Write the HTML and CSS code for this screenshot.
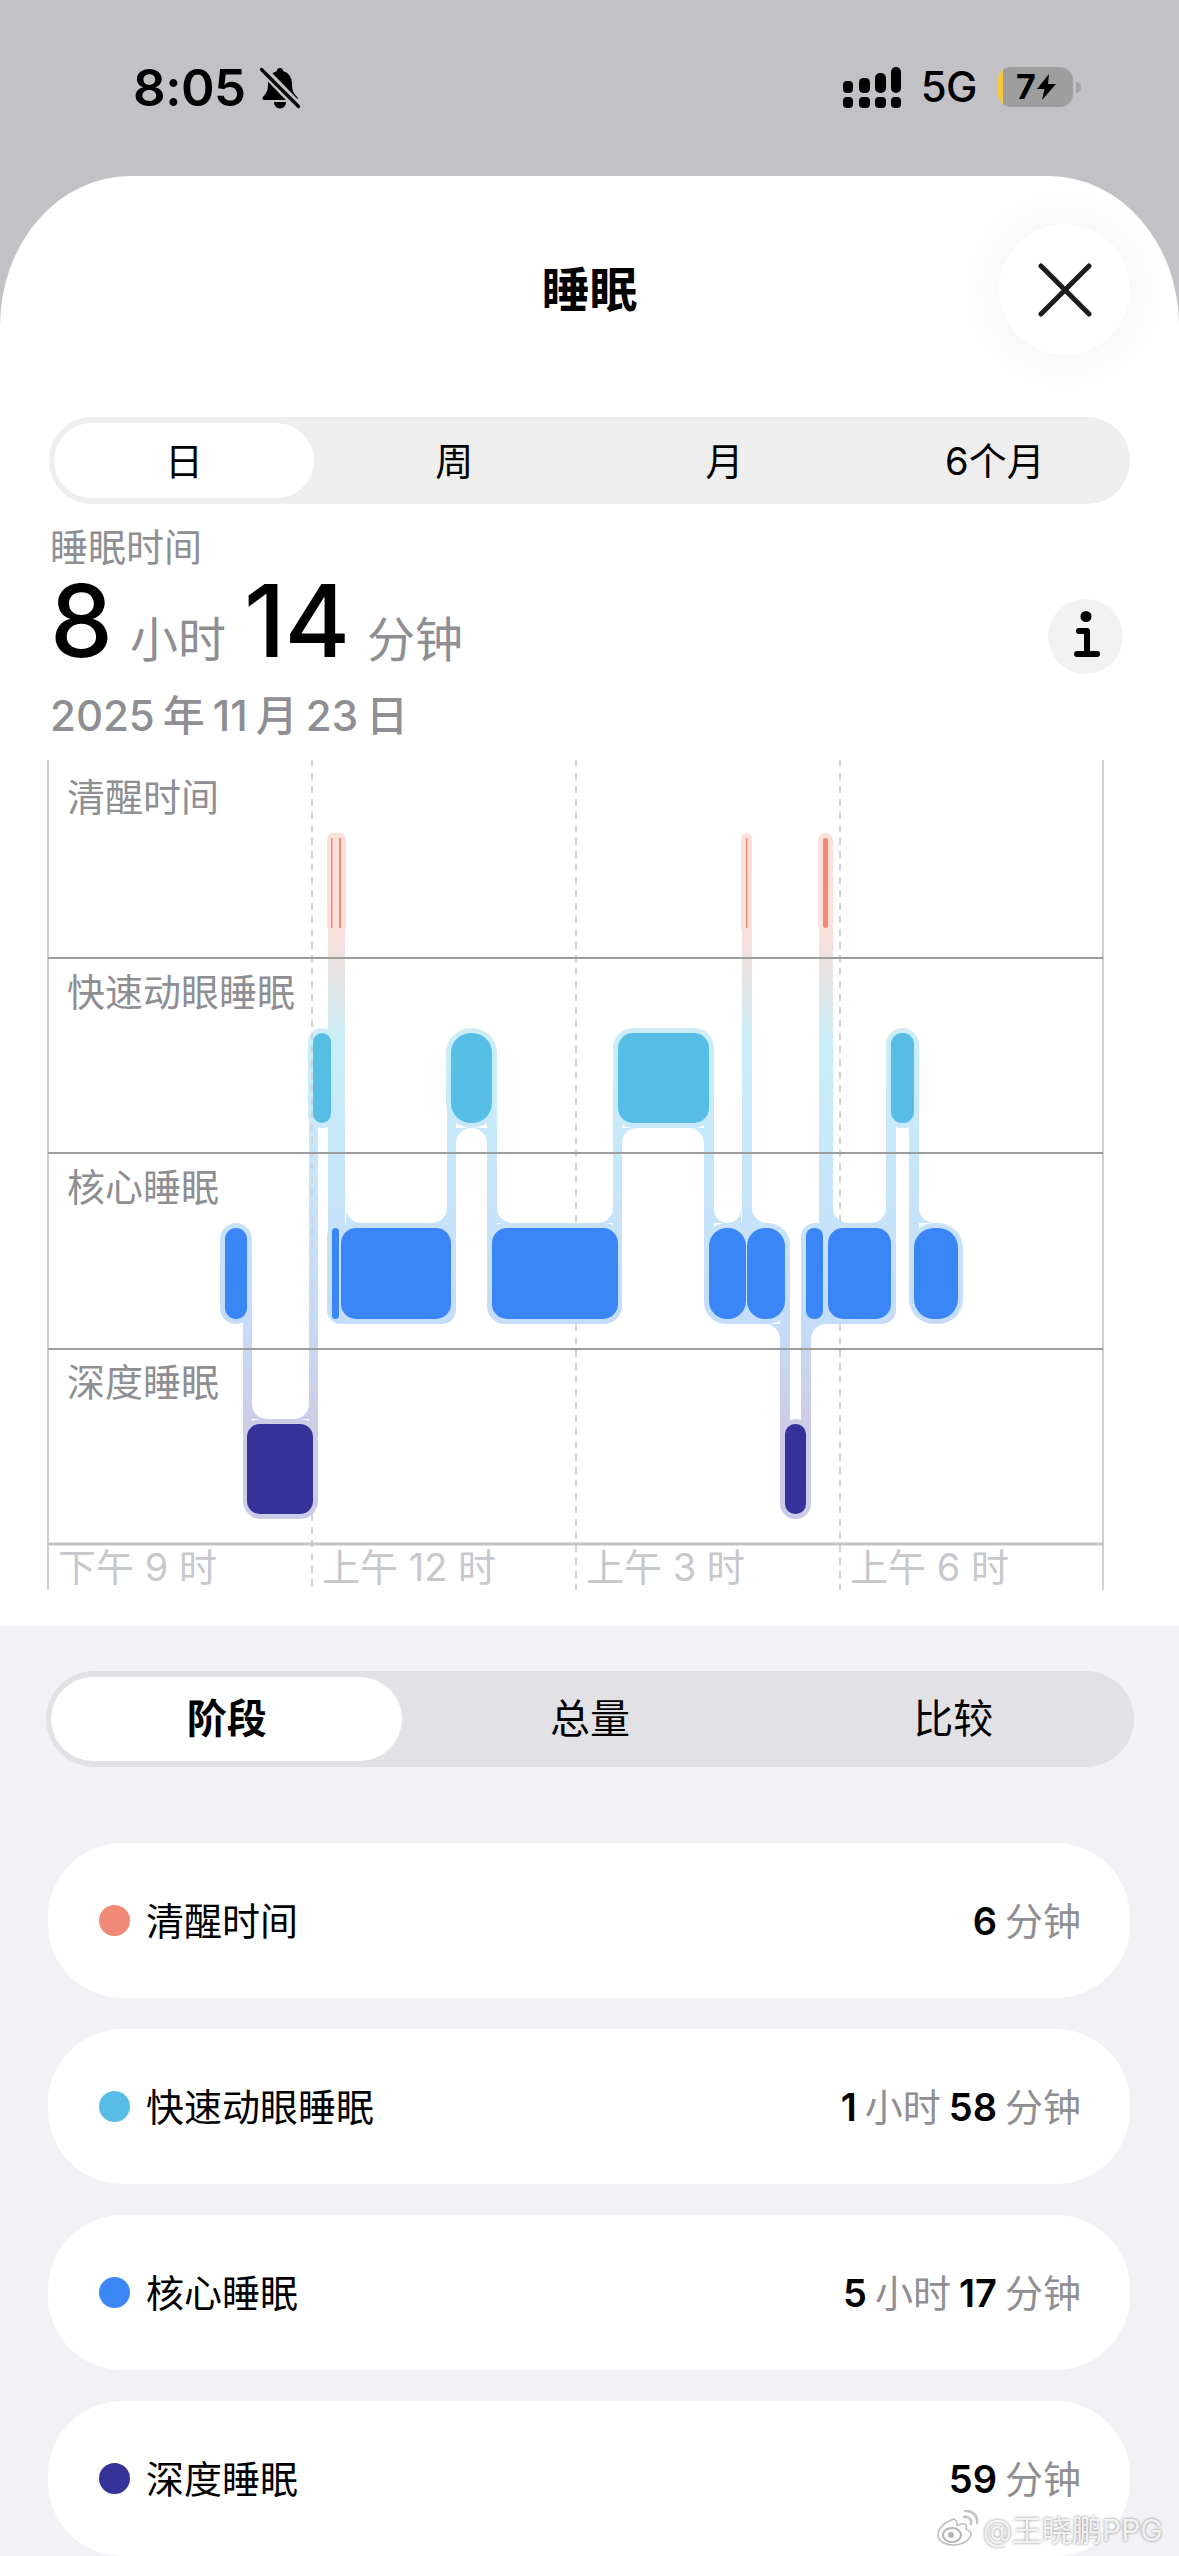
FILE: index.html
```html
<!DOCTYPE html>
<html lang="zh">
<head>
<meta charset="utf-8">
<title>睡眠</title>
<link rel="stylesheet" href="styles.css">
</head>
<body>
<div class="page">
  <div class="backdrop">
    <header class="status">
      <div class="status-left">
        <span class="time">8:05</span>
        <svg class="bell" width="42" height="44" viewBox="0 0 42 44">
          <path d="M21 2c2 0 3 1.500 3.300 3.200 6 1.600 8.700 6.600 8.700 13 0 6 1.500 9 5 12.500 1.200 1.300.6 3.300-1.500 3.300H5.500c-2.100 0-2.700-2-1.500-3.300 3.500-3.500 5-6.500 5-12.500 0-6.400 2.700-11.400 8.700-13C18 3 19 2 21 2zM15 36h12c0 3.600-2.600 6.500-6 6.500s-6-2.900-6-6.500z" fill="#000"/>
          <path d="M3 3l36 37" stroke="#c2c1c6" stroke-width="9"/>
          <path d="M2.500 3.500L39.500 40.500" stroke="#000" stroke-width="3.200" stroke-linecap="round"/>
        </svg>
      </div>
      <div class="status-right">
        <svg class="signal" width="58" height="41" viewBox="0 0 58 41">
          <rect x="0" y="14" width="10" height="12" rx="4"/>
          <rect x="16" y="11" width="11" height="15" rx="4.500"/>
          <rect x="32" y="6" width="11" height="20" rx="5"/>
          <rect x="48" y="0" width="10" height="26" rx="5"/>
          <rect x="0" y="30" width="10" height="11" rx="4"/>
          <rect x="16" y="30" width="11" height="11" rx="4"/>
          <rect x="32" y="30" width="11" height="11" rx="4"/>
          <rect x="48" y="30" width="10" height="11" rx="4"/>
        </svg>
        <span class="net">5G</span>
        <div class="battery">
          <span class="batt-level">7</span>
          <svg class="bolt" width="19" height="26" viewBox="0 0 19 26"><path d="M12 0L0 15h7.500L5 26 19 10h-8z" fill="#000"/></svg>
        </div>
        <span class="batt-nub"></span>
      </div>
    </header>

    <main class="sheet">
      <div class="nav">
        <h1 class="title">睡眠</h1>
        <button class="close">
          <svg width="54" height="54" viewBox="0 0 54 54"><path d="M3 3l48 48M51 3L3 51" stroke="#1c1c1e" stroke-width="5" stroke-linecap="round"/></svg>
        </button>
      </div>

      <div class="seg seg-range">
        <span class="seg-item is-on">日</span>
        <span class="seg-item">周</span>
        <span class="seg-item">月</span>
        <span class="seg-item">6个月</span>
      </div>

      <section class="summary">
        <div class="sum-label">睡眠时间</div>
        <div class="sum-row">
          <div class="big">
            <span class="big-num">8</span><span class="big-unit">小时</span>
            <span class="big-num">14</span><span class="big-unit">分钟</span>
          </div>
          <button class="info">
            <svg width="32" height="50" viewBox="0 0 32 50">
              <circle cx="15" cy="5.500" r="5.500" fill="#000"/>
              <path d="M8 20h8v23M6 43h20" fill="none" stroke="#000" stroke-width="6" stroke-linecap="round" stroke-linejoin="round"/>
            </svg>
          </button>
        </div>
        <div class="date"><span>2025</span><span>年</span><span>11</span><span>月</span><span>23</span><span>日</span></div>
      </section>

      <svg class="chart" width="1179" height="866" viewBox="0 760 1179 866">
        <defs>
          <linearGradient id="halo" gradientUnits="userSpaceOnUse" x1="0" y1="833" x2="0" y2="1519">
            <stop offset="0" stop-color="#fbdfda"/>
            <stop offset=".141" stop-color="#fbe0db"/>
            <stop offset=".22" stop-color="#e3e5e7"/>
            <stop offset=".309" stop-color="#c8eef8"/>
            <stop offset=".462" stop-color="#c7e7fb"/>
            <stop offset=".716" stop-color="#c5dcf8"/>
            <stop offset=".854" stop-color="#cdcde8"/>
            <stop offset="1" stop-color="#cacbe7"/>
          </linearGradient>
        </defs>

        <g fill="url(#halo)">
          <!-- awake halos -->
          <rect x="327" y="833" width="19" height="100" rx="6"/>
          <rect x="741" y="833" width="11" height="100" rx="5.500"/>
          <rect x="818" y="833" width="15" height="100" rx="7.500"/>
          <!-- rem halos -->
          <rect x="308" y="1028" width="28" height="100" rx="14"/>
          <rect x="446" y="1028" width="51" height="100" rx="25"/>
          <rect x="613" y="1028" width="101" height="100" rx="20"/>
          <rect x="886" y="1028" width="33" height="100" rx="16.500"/>
          <!-- core halos -->
          <rect x="220" y="1223" width="32" height="101" rx="16"/>
          <rect x="327" y="1223" width="129" height="101" rx="14"/>
          <rect x="487" y="1223" width="135" height="101" rx="18"/>
          <rect x="704" y="1223" width="86" height="101" rx="22"/>
          <rect x="801" y="1223" width="95" height="101" rx="14"/>
          <rect x="909" y="1223" width="54" height="101" rx="25"/>
          <!-- deep halos -->
          <rect x="243" y="1419" width="75" height="100" rx="18"/>
          <rect x="780" y="1419" width="31" height="100" rx="15.500"/>
          <!-- connectors -->
          <rect x="243" y="1300" width="9" height="140"/>
          <rect x="309" y="1100" width="9" height="340"/>
          <rect x="328" y="920" width="17" height="350"/>
          <rect x="447" y="1100" width="9" height="150"/>
          <rect x="487" y="1100" width="10" height="150"/>
          <rect x="613" y="1100" width="9" height="150"/>
          <rect x="704" y="1100" width="10" height="150"/>
          <rect x="742" y="920" width="10" height="330"/>
          <rect x="819" y="920" width="14" height="330"/>
          <rect x="886" y="1100" width="10" height="150"/>
          <rect x="909" y="1100" width="10" height="150"/>
          <rect x="780" y="1300" width="10" height="140"/>
          <rect x="801" y="1300" width="10" height="140"/>
          <!-- fillets -->
          <path d="M346 1223V1208A15 15 0 0 0 361 1223Z"/>
          <path d="M447 1223V1208A15 15 0 0 1 432 1223Z"/>
          <path d="M497 1223V1208A15 15 0 0 0 512 1223Z"/>
          <path d="M613 1223V1208A15 15 0 0 1 598 1223Z"/>
          <path d="M714 1223V1208A13.500 13.500 0 0 0 727.500 1223Z"/>
          <path d="M741 1223V1208A13.500 13.500 0 0 1 727.500 1223Z"/>
          <path d="M752 1223V1208A15 15 0 0 0 767 1223Z"/>
          <path d="M833 1223V1208A15 15 0 0 0 848 1223Z"/>
          <path d="M886 1223V1208A15 15 0 0 1 871 1223Z"/>
          <path d="M919 1223V1208A15 15 0 0 0 934 1223Z"/>
          <path d="M456 1128V1143A15.500 15.500 0 0 1 471.500 1128Z"/>
          <path d="M487 1128V1143A15.500 15.500 0 0 0 471.500 1128Z"/>
          <path d="M622 1128V1143A15 15 0 0 1 637 1128Z"/>
          <path d="M704 1128V1143A15 15 0 0 0 689 1128Z"/>
          <path d="M896 1128V1142A6.500 6.500 0 0 1 902.500 1128Z"/>
          <path d="M909 1128V1142A6.500 6.500 0 0 0 902.500 1128Z"/>
          <path d="M780 1324V1339A15 15 0 0 0 765 1324Z"/>
          <path d="M811 1324V1339A15 15 0 0 1 826 1324Z"/>
          <path d="M252 1419V1404A15 15 0 0 0 267 1419Z"/>
          <path d="M309 1419V1404A15 15 0 0 1 294 1419Z"/>
        </g>

        <!-- grid -->
        <g class="grid-edge">
          <path d="M48 760V1590M1103 760V1590"/>
        </g>
        <g class="grid-dash">
          <path d="M312 760V1590M576 760V1223M576 1324V1590M840 760V1223M840 1324V1590"/>
        </g>
        <g class="grid-row">
          <path d="M48 958H1103M48 1153H1103M48 1349H1103"/>
        </g>
        <path class="grid-base" d="M48 1544H1103"/>

        <!-- bars -->
        <g fill="#ef8a74">
          <rect x="331" y="838" width="1.500" height="90"/>
          <rect x="339" y="838" width="2" height="90"/>
          <rect x="746" y="838" width="1.500" height="90"/>
          <rect x="823" y="838" width="5" height="90" rx="2.500"/>
        </g>
        <g fill="#56bde5">
          <rect x="313" y="1033" width="18" height="90" rx="9"/>
          <rect x="451" y="1033" width="41" height="90" rx="20"/>
          <rect x="618" y="1033" width="91" height="90" rx="15"/>
          <rect x="891" y="1033" width="23" height="90" rx="11"/>
        </g>
        <g fill="#3b86f6">
          <rect x="225" y="1228" width="22" height="91" rx="11"/>
          <rect x="332" y="1228" width="7" height="91" rx="3.500"/>
          <rect x="341" y="1228" width="110" height="91" rx="15"/>
          <rect x="492" y="1228" width="126" height="91" rx="15"/>
          <rect x="709" y="1228" width="37" height="91" rx="18"/>
          <rect x="747" y="1228" width="38" height="91" rx="18"/>
          <rect x="806" y="1228" width="17" height="91" rx="8"/>
          <rect x="828" y="1228" width="63" height="91" rx="15"/>
          <rect x="914" y="1228" width="44" height="91" rx="20"/>
        </g>
        <g fill="#35339a">
          <rect x="247" y="1424" width="66" height="90" rx="13"/>
          <rect x="785" y="1424" width="21" height="90" rx="10"/>
        </g>

        <!-- labels -->
        <g class="row-label">
          <text x="67" y="811">清醒时间</text>
          <text x="67" y="1006">快速动眼睡眠</text>
          <text x="67" y="1201">核心睡眠</text>
          <text x="67" y="1396">深度睡眠</text>
        </g>
        <g class="axis-label">
          <text x="58" y="1581">下午 9 时</text>
          <text x="322" y="1581">上午 12 时</text>
          <text x="586" y="1581">上午 3 时</text>
          <text x="850" y="1581">上午 6 时</text>
        </g>
      </svg>
    </main>
  </div>

  <section class="lower">
    <div class="seg seg-view">
      <span class="seg-item is-on">阶段</span>
      <span class="seg-item">总量</span>
      <span class="seg-item">比较</span>
    </div>
    <div class="cards">
      <div class="card">
        <span class="dot dot-awake"></span><span class="name">清醒时间</span>
        <span class="dur"><b>6</b><span>分钟</span></span>
      </div>
      <div class="card">
        <span class="dot dot-rem"></span><span class="name">快速动眼睡眠</span>
        <span class="dur"><b>1</b><span>小时</span><b>58</b><span>分钟</span></span>
      </div>
      <div class="card">
        <span class="dot dot-core"></span><span class="name">核心睡眠</span>
        <span class="dur"><b>5</b><span>小时</span><b>17</b><span>分钟</span></span>
      </div>
      <div class="card">
        <span class="dot dot-deep"></span><span class="name">深度睡眠</span>
        <span class="dur"><b>59</b><span>分钟</span></span>
      </div>
    </div>
  </section>

  <div class="watermark">
    <svg width="42" height="36" viewBox="0 0 42 36">
      <path d="M17 9C9 11 1 18 1 25c0 6 7 10 15 10 10 0 18-6 18-11 0-3-3-4-5-5 1-3 0-5-2-5-2-.500-5 .500-7 1.500 0-3-1-6-3-6z" fill="#fff" stroke="#bdbdbd" stroke-width="1.500"/>
      <ellipse cx="15" cy="25" rx="9" ry="7" fill="#fff" stroke="#b5b5b5" stroke-width="2"/>
      <circle cx="14" cy="25" r="3" fill="#b5b5b5"/>
      <path d="M27 7c4-1 8 2 7 7M28 1c7-1 13 5 12 12" fill="none" stroke="#c4c4c4" stroke-width="2.500" stroke-linecap="round"/>
    </svg>
    <span>@王晓鹏PPG</span>
  </div>
</div>
</body>
</html>
```

FILE: styles.css
```css
* { box-sizing: border-box; }
html, body { margin: 0; padding: 0; }
body {
  width: 1179px;
  height: 2556px;
  overflow: hidden;
  background: #f1f1f6;
  font-family: Inter, "Noto Sans CJK SC", sans-serif;
  color: #000;
}
.page { position: relative; width: 1179px; height: 2556px; background: #f1f1f6; }
.backdrop { background: #c2c1c6; }

/* status bar */
.status {
  height: 176px;
  display: flex;
  justify-content: space-between;
  align-items: flex-start;
  padding: 60px 98px 0 133px;
}
.status-left { display: flex; align-items: center; gap: 13px; height: 56px; }
.time { font-size: 51px; font-weight: 600; line-height: 56px; letter-spacing: -.5px; }
.bell { display: block; }
.status-right { display: flex; align-items: center; height: 56px; margin-top: -1px; }
.signal { display: block; fill: #000; }
.net { font-size: 42px; font-weight: 500; margin-left: 20px; line-height: 56px; letter-spacing: -.5px; }
.battery {
  margin-left: 21px;
  width: 75px;
  height: 40px;
  border-radius: 13px;
  background: linear-gradient(90deg, #f7c93e 0 5px, #9e9e9f 5px);
  display: flex;
  align-items: center;
  padding-left: 18px;
  gap: 1px;
}
.batt-level { font-size: 34px; font-weight: 700; line-height: 40px; }
.bolt { display: block; }
.batt-nub { width: 5px; height: 11px; margin-left: 3px; background: #a5a5a8; border-radius: 0 6px 6px 0; }

/* sheet */
.sheet {
  background: #fff;
  border-radius: 130px 130px 0 0 / 150px 150px 0 0;
  height: 1450px;
}
.nav {
  position: relative;
  height: 241px;
  display: flex;
  justify-content: center;
  padding-top: 84px;
}
.title { margin: 0; font-size: 48px; font-weight: 700; line-height: 60px; }
.close {
  position: absolute;
  left: 999px;
  top: 48px;
  width: 131px;
  height: 131px;
  padding: 0;
  border: 0;
  border-radius: 50%;
  background: #fff;
  box-shadow: 0 0 50px rgba(0, 0, 0, .06);
  display: flex;
  align-items: center;
  justify-content: center;
}

/* segmented controls */
.seg { display: grid; }
.seg-item {
  display: flex;
  align-items: center;
  justify-content: center;
  line-height: 1;
}
.seg-item.is-on { background: #fff; }
.seg-range {
  margin: 0 49px;
  height: 87px;
  padding: 6px 5px;
  border-radius: 43px;
  background: #eeeeef;
  grid-template-columns: repeat(4, 1fr);
  column-gap: 10px;
  font-size: 38px;
}
.seg-range .is-on { border-radius: 38px; }
.seg-view {
  margin: 0 45px 0 46px;
  height: 96px;
  padding: 6px 5px;
  border-radius: 48px;
  background: #e1e1e6;
  grid-template-columns: repeat(3, 1fr);
  column-gap: 12px;
  font-size: 40px;
}
.seg-view .is-on { border-radius: 42px; font-weight: 700; }

/* summary */
.summary { height: 256px; padding: 20px 56px 0 50px; }
.sum-label { font-size: 38px; line-height: 46px; color: #8e8e93; }
.sum-row { height: 120px; display: flex; justify-content: space-between; align-items: center; }
.big { display: flex; align-items: baseline; gap: 18px; }
.big-num { font-size: 100px; font-weight: 500; line-height: 120px; letter-spacing: -1px; }
.big-unit { font-size: 48px; color: #8e8e93; line-height: 120px; }
.info {
  width: 75px;
  height: 75px;
  margin-top: 12px;
  padding: 0;
  border: 0;
  border-radius: 50%;
  background: #f2f2f2;
  display: flex;
  align-items: center;
  justify-content: center;
}
.info svg { display: block; margin-left: 2px; }
.date { display: flex; gap: 8px; font-size: 42px; font-weight: 500; line-height: 52px; color: #8e8e93; }

/* chart */
.chart { display: block; }
.grid-edge path { stroke: #cfcfcf; stroke-width: 2; fill: none; }
.grid-dash path { stroke: #d1d1d6; stroke-width: 2; stroke-dasharray: 7 6; fill: none; }
.grid-row path { stroke: #9d9d9d; stroke-width: 2; fill: none; }
.grid-base { stroke: #c4c4c4; stroke-width: 3; fill: none; }
.row-label text { font-size: 38px; fill: #8e8e93; font-family: Inter, "Noto Sans CJK SC", sans-serif; }
.axis-label text { font-size: 38px; fill: #c7c7cc; font-family: Inter, "Noto Sans CJK SC", sans-serif; }

/* lower */
.lower { padding-top: 45px; }
.cards { margin: 76px 49px 0 48px; display: flex; flex-direction: column; gap: 31px; }
.card {
  height: 155px;
  border-radius: 74px;
  background: #fff;
  display: flex;
  align-items: center;
  padding: 0 49px 0 51px;
  font-size: 38px;
}
.dot { width: 31px; height: 31px; border-radius: 50%; margin-right: 16px; }
.dot-awake { background: #f08a76; }
.dot-rem { background: #57bde6; }
.dot-core { background: #3c87f6; }
.dot-deep { background: #35339a; }
.name { line-height: 1; }
.dur { margin-left: auto; display: flex; align-items: baseline; gap: 8px; color: #8e8e93; line-height: 1; }
.dur b { color: #000; font-weight: 600; }

/* watermark */
.watermark {
  position: absolute;
  left: 937px;
  top: 2506px;
  display: flex;
  align-items: center;
  gap: 4px;
  font-size: 30px;
  color: rgba(255, 255, 255, .85);
  text-shadow: 0 0 3px rgba(90, 90, 90, .75);
  white-space: nowrap;
}
.watermark svg { display: block; }
```
